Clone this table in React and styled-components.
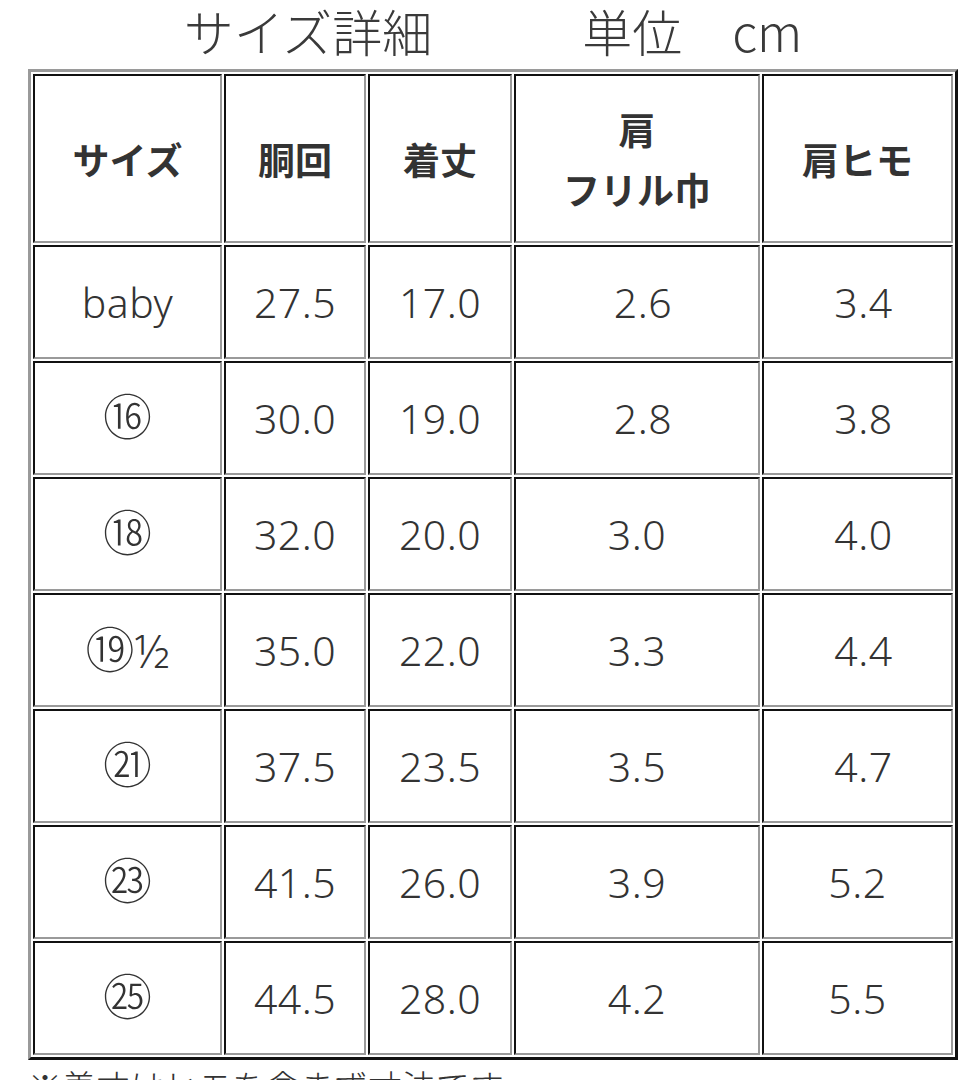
import styled, { createGlobalStyle, css } from "styled-components";

const GlobalStyle = createGlobalStyle`
  html, body {
    margin: 0;
    padding: 0;
    background: #fff;
  }
  body {
    font-family: "Noto Sans", "Noto Sans CJK JP", sans-serif;
    color: #333;
  }
`;

const Page = styled.div`
  width: 930px;
  padding-left: 28px;
`;

const Title = styled.h1`
  margin: 0;
  height: 69px;
  line-height: 60px;
  text-align: center;
  white-space: pre;
  font-family: "Noto Sans CJK JP", sans-serif;
  font-size: 50px;
  font-weight: 300;
  color: #3a3a3a;
`;

const SizeTable = styled.table`
  width: 930px;
  table-layout: fixed;
  border-collapse: separate;
  border-spacing: 2px;
  border: 3px solid;
  border-color: #9a9a9a #111 #111 #9a9a9a;
`;

const Col = styled.col`
  width: ${(p) => p.$w}px;
`;

const cellBase = css`
  box-sizing: border-box;
  padding: 0;
  border: 2px solid;
  border-color: #111 #9a9a9a #9a9a9a #111;
  text-align: center;
  vertical-align: middle;
`;

const HeadCell = styled.th`
  ${cellBase};
  height: 169px;
  font-family: "Noto Sans CJK JP", sans-serif;
  font-size: 37px;
  font-weight: 700;
  line-height: 60px;
  color: #333;
`;

const Cell = styled.td`
  ${cellBase};
  height: 114px;
  padding-left: ${(p) => (p.$nudge ? 12 : 0)}px;
  font-size: 41px;
  font-weight: 300;
  color: #333;
  letter-spacing: 0.5px;
`;

const Circled = styled.span`
  font-family: "Noto Sans CJK JP", sans-serif;
  font-size: 49px;
  font-weight: 300;
  line-height: 1;
  letter-spacing: 0;
`;

const Fraction = styled.span`
  font-size: 46px;
  letter-spacing: 0;
`;

const Note = styled.p`
  margin: 6px 0 0;
  font-family: "Noto Sans CJK JP", sans-serif;
  font-size: 34px;
  font-weight: 300;
  line-height: 40px;
  color: #333;
`;

const widths = [189, 142, 144, 246, 191];

const rows = [
  { size: "baby", waist: "27.5", length: "17.0", frill: "2.6", strap: "3.4", nf: true, ns: true },
  { size: "⑯", circ: true, waist: "30.0", length: "19.0", frill: "2.8", strap: "3.8", nf: true, ns: true },
  { size: "⑱", circ: true, waist: "32.0", length: "20.0", frill: "3.0", strap: "4.0", ns: true },
  { size: "⑲", circ: true, extra: "½", waist: "35.0", length: "22.0", frill: "3.3", strap: "4.4", ns: true },
  { size: "㉑", circ: true, waist: "37.5", length: "23.5", frill: "3.5", strap: "4.7", ns: true },
  { size: "㉓", circ: true, waist: "41.5", length: "26.0", frill: "3.9", strap: "5.2" },
  { size: "㉕", circ: true, waist: "44.5", length: "28.0", frill: "4.2", strap: "5.5" },
];

export default function App() {
  return (
    <>
      <GlobalStyle />
      <Page>
        <Title>{"サイズ詳細　　　単位　cm"}</Title>
        <SizeTable>
          <colgroup>
            {widths.map((w, i) => (
              <Col key={i} $w={w} />
            ))}
          </colgroup>
          <thead>
            <tr>
              <HeadCell>サイズ</HeadCell>
              <HeadCell>胴回</HeadCell>
              <HeadCell>着丈</HeadCell>
              <HeadCell>
                肩
                <br />
                フリル巾
              </HeadCell>
              <HeadCell>肩ヒモ</HeadCell>
            </tr>
          </thead>
          <tbody>
            {rows.map((r) => (
              <tr key={r.size}>
                <Cell>
                  {r.circ ? <Circled>{r.size}</Circled> : r.size}
                  {r.extra && <Fraction>{r.extra}</Fraction>}
                </Cell>
                <Cell>{r.waist}</Cell>
                <Cell>{r.length}</Cell>
                <Cell $nudge={r.nf}>{r.frill}</Cell>
                <Cell $nudge={r.ns}>{r.strap}</Cell>
              </tr>
            ))}
          </tbody>
        </SizeTable>
        <Note>※着丈はヒモを含まず寸法です</Note>
      </Page>
    </>
  );
}
